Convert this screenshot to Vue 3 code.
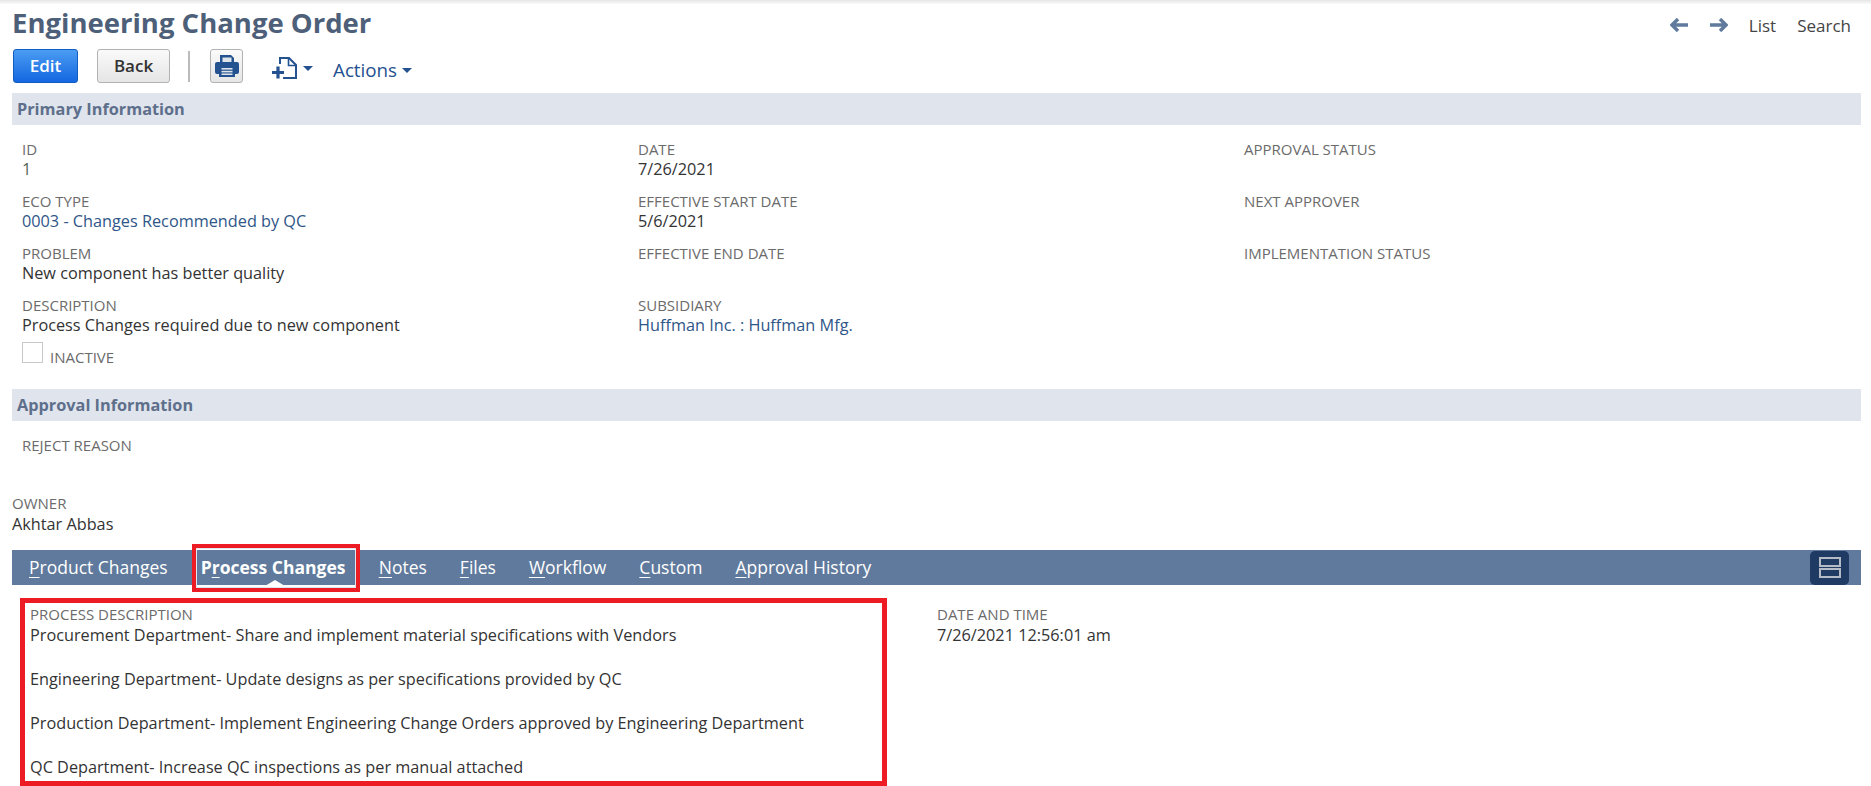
<script setup>
const rows = [
  [
    { l: 'ID', v: '1', muted: true },
    { l: 'ECO TYPE', v: '0003 - Changes Recommended by QC', link: true },
    { l: 'PROBLEM', v: 'New component has better quality' },
    { l: 'DESCRIPTION', v: 'Process Changes required due to new component' },
  ],
  [
    { l: 'DATE', v: '7/26/2021' },
    { l: 'EFFECTIVE START DATE', v: '5/6/2021' },
    { l: 'EFFECTIVE END DATE', v: '' },
    { l: 'SUBSIDIARY', v: 'Huffman Inc. : Huffman Mfg.', link: true },
  ],
  [
    { l: 'APPROVAL STATUS', v: '' },
    { l: 'NEXT APPROVER', v: '' },
    { l: 'IMPLEMENTATION STATUS', v: '' },
  ],
]
const lines = [
  'Procurement Department- Share and implement material specifications with Vendors',
  'Engineering Department- Update designs as per specifications provided by QC',
  'Production Department- Implement Engineering Change Orders approved by Engineering Department',
  'QC Department- Increase QC inspections as per manual attached',
]
</script>

<template>
  <div class="page">
    <div class="topshade"></div>
    <header class="head">
      <h1>Engineering Change Order</h1>
      <nav class="nav">
        <svg class="arrow" viewBox="0 0 18 14" width="18" height="14"><path d="M8 1 2 7l6 6M2.500 7H18" fill="none" stroke="#5f7a9c" stroke-width="3.400"/></svg>
        <svg class="arrow" viewBox="0 0 18 14" width="18" height="14"><path d="M10 1l6 6-6 6M15.500 7H0" fill="none" stroke="#5f7a9c" stroke-width="3.400"/></svg>
        <span class="navlink">List</span>
        <span class="navlink">Search</span>
      </nav>
    </header>

    <div class="toolbar">
      <button class="btn primary">Edit</button>
      <button class="btn back">Back</button>
      <span class="sep"></span>
      <button class="btn print">
        <svg viewBox="0 0 24 22" width="24" height="22">
          <path d="M5 0h11l3 3v5H5z" fill="#24518f"/>
          <rect x="7.500" y="2.500" width="9" height="4.500" fill="#dfe3ea"/>
          <path d="M2 7h20a2 2 0 0 1 2 2v8a2 2 0 0 1-2 2h-2v-6H4v6H2a2 2 0 0 1-2-2V9a2 2 0 0 1 2-2z" fill="#24518f"/>
          <rect x="4" y="11" width="16" height="11" fill="#24518f"/>
          <rect x="6.500" y="13" width="11" height="1.600" fill="#dfe3ea"/>
          <rect x="6.500" y="15.800" width="11" height="1.600" fill="#dfe3ea"/>
          <rect x="6.500" y="18.500" width="11" height="1.500" fill="#dfe3ea"/>
        </svg>
      </button>
      <span class="newdoc">
        <svg viewBox="0 0 25 22" width="25" height="22">
          <path d="M8 7V1h9l7 7v13H11" fill="none" stroke="#24518f" stroke-width="2"/>
          <path d="M16.500 1v7.500H24" fill="none" stroke="#24518f" stroke-width="1.600"/>
          <path d="M0 15.500h12M6 9.500v12" fill="none" stroke="#24518f" stroke-width="3.200"/>
        </svg>
        <i class="caret"></i>
      </span>
      <span class="actions">Actions<i class="caret"></i></span>
    </div>

    <h2 class="section first">Primary Information</h2>
    <div class="fields">
      <div v-for="(col, c) in rows" :key="c" class="col">
        <div v-for="f in col" :key="f.l" class="field">
          <div class="label">{{ f.l }}</div>
          <div class="value" :class="{ link: f.link, muted: f.muted }">{{ f.v }}</div>
        </div>
        <label v-if="c === 0" class="check"><span class="box"></span><span class="label">INACTIVE</span></label>
      </div>
    </div>

    <h2 class="section second">Approval Information</h2>
    <div class="reject label">REJECT REASON</div>

    <div class="owner">
      <div class="label">OWNER</div>
      <div class="value">Akhtar Abbas</div>
    </div>

    <div class="tabs">
      <span class="tab"><u>P</u>roduct Changes</span>
      <span class="tab active"><span class="activein">P<u>r</u>ocess Changes<i class="notch"></i></span></span>
      <span class="tab"><u>N</u>otes</span>
      <span class="tab"><u>F</u>iles</span>
      <span class="tab"><u>W</u>orkflow</span>
      <span class="tab"><u>C</u>ustom</span>
      <span class="tab"><u>A</u>pproval History</span>
      <span class="toggle">
        <svg viewBox="0 0 22 21" width="22" height="21"><path d="M1 1h20v8H1zM1 12h20v8H1z" fill="none" stroke="#b4bac6" stroke-width="2"/></svg>
      </span>
    </div>

    <div class="lower">
      <div class="redbox">
        <div class="label">PROCESS DESCRIPTION</div>
        <p v-for="t in lines" :key="t" class="value para">{{ t }}</p>
      </div>
      <div class="dt">
        <div class="label">DATE AND TIME</div>
        <div class="value">7/26/2021 12:56:01 am</div>
      </div>
    </div>
  </div>
</template>

<style>
html, body { margin: 0; background: #fff; }
</style>

<style scoped>
.page { position: relative; width: 1871px; height: 786px; overflow: hidden; font-family: "Open Sans", sans-serif; font-size: 15px; color: #333; background: #fff; }
.topshade { height: 4px; background: linear-gradient(#e6e6e6, #fafafa); }
.head { display: flex; justify-content: space-between; align-items: flex-start; padding: 0 20px 0 12px; height: 42px; box-sizing: border-box; }
h1 { margin: 0; font-size: 27.500px; line-height: 38px; font-weight: 700; color: #4d5f79; }
.nav { display: flex; align-items: center; gap: 21px; padding-top: 6px; box-sizing: border-box; height: 36px; }
.navlink { font-size: 17px; color: #444; }
.nav .arrow + .arrow { margin-left: 1px; }
.toolbar { display: flex; align-items: center; height: 34px; margin-top: 3px; padding-left: 13px; }
.btn { box-sizing: border-box; height: 34px; border-radius: 3px; font-family: inherit; font-size: 17px; line-height: 30px; font-weight: 600; padding: 0 0 1px; border: 1px solid #b2b2b2; background: linear-gradient(#fafafa, #e5e5e5); color: #333; }
.primary { width: 65px; color: #fff; background: linear-gradient(#4b9cf2, #1467e0); border-color: #125ec0; }
.back { width: 73px; margin-left: 19px; }
.sep { width: 2px; height: 31px; background: #bbb; margin-left: 18px; }
.print { width: 33px; margin-left: 20px; display: flex; align-items: flex-start; justify-content: center; padding: 5px 0 0; }
.newdoc { display: flex; align-items: center; margin-left: 29px; height: 34px; padding-top: 4px; box-sizing: border-box; }
.caret { display: inline-block; width: 0; height: 0; border: 5px solid transparent; border-top: 5px solid #24518f; border-bottom: 0; margin-left: 6px; }
.actions { margin-left: 20px; font-size: 18.800px; color: #24518f; padding-top: 7px; display: flex; align-items: center; }
.actions .caret { margin-left: 5px; margin-top: 2px; }
.section { margin: 0; margin-left: 12px; width: 1849px; height: 32px; line-height: 32px; background: #e0e4ed; color: #5e6f8b; font-size: 16.300px; font-weight: 700; padding-left: 5px; box-sizing: border-box; }
.first { margin-top: 10px; }
.second { margin-top: 0; }
.fields { display: grid; grid-template-columns: 616px 606px 1fr; padding: 14px 0 0 22px; height: 264px; box-sizing: border-box; }
.field { height: 52px; }
.label { font-size: 15px; line-height: 20px; color: #6b6b6b; }
.value { font-size: 16.250px; line-height: 20px; color: #333; min-height: 20px; }
.link { color: #2f5688; }
.muted { color: #556655; }
.check { display: flex; align-items: flex-end; gap: 7px; margin-top: -5px; }
.box { display: block; width: 21px; height: 21px; border: 1px solid #c8c8c8; box-sizing: border-box; }
.check .label { line-height: 16px; margin-bottom: -2px; }
.reject { padding: 14px 0 0 22px; height: 72px; box-sizing: border-box; }
.owner { padding-left: 12px; height: 57px; box-sizing: border-box; }
.owner .value { margin-top: 1px; }
.tabs { margin-left: 12px; width: 1849px; height: 35px; background: #5f7a9c; display: flex; align-items: center; color: #fff; position: relative; }
.tab { font-size: 17.500px; line-height: 35px; color: #fff; margin-right: 33px; white-space: nowrap; }
.tab:first-child { margin-left: 17px; }
.tab u { text-underline-offset: 3px; text-decoration-thickness: 1px; }
.tab.active { font-weight: 700; position: relative; margin-left: -9px; margin-right: 19px; width: 168px; height: 48px; box-sizing: border-box; border: 4px solid #ed1c24; padding-left: 5px; line-height: 38px; box-shadow: inset 0 0 0 1px #dfe5ee; z-index: 1; }
.activein { display: block; position: relative; height: 40px; }
.notch { position: absolute; left: 50%; margin-left: -13px; bottom: 2px; width: 0; height: 0; border: 10px solid transparent; border-top: 0; border-bottom: 6px solid #fff; }
.toggle { margin-left: auto; margin-right: 12px; width: 39px; height: 34px; border-radius: 5px; background: #1f3a63; display: flex; align-items: center; justify-content: center; }
.lower { display: flex; margin-top: 13px; margin-left: 20px; align-items: flex-start; }
.redbox { box-sizing: border-box; width: 867px; height: 188px; border: 5px solid #ed1c24; padding: 1px 0 0 5px; }
.redbox .label { margin-bottom: 1px; }
.para { margin: 0 0 24px; }
.dt { margin-left: 50px; padding-top: 6px; }
.dt .label { margin-bottom: 1px; }
</style>
